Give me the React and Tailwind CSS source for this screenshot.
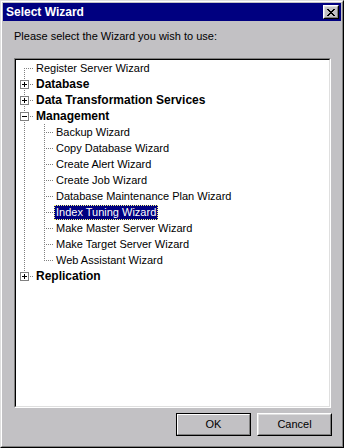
import React from 'react';

const rows = [
  { label: 'Register Server Wizard', level: 0, pos: 'first' },
  { label: 'Database', level: 0, pos: 'mid', bold: true, exp: '+' },
  { label: 'Data Transformation Services', level: 0, pos: 'mid', bold: true, exp: '+' },
  { label: 'Management', level: 0, pos: 'mid', bold: true, exp: '-' },
  { label: 'Backup Wizard', level: 1, pos: 'mid' },
  { label: 'Copy Database Wizard', level: 1, pos: 'mid' },
  { label: 'Create Alert Wizard', level: 1, pos: 'mid' },
  { label: 'Create Job Wizard', level: 1, pos: 'mid' },
  { label: 'Database Maintenance Plan Wizard', level: 1, pos: 'mid' },
  { label: 'Index Tuning Wizard', level: 1, pos: 'mid', selected: true },
  { label: 'Make Master Server Wizard', level: 1, pos: 'mid' },
  { label: 'Make Target Server Wizard', level: 1, pos: 'mid' },
  { label: 'Web Assistant Wizard', level: 1, pos: 'last' },
  { label: 'Replication', level: 0, pos: 'last', bold: true, exp: '+' },
];

// dotted line made of single pixels, every other one
function vDots(x, y1, y2, key) {
  const out = [];
  for (let y = y1; y < y2; y++) {
    if (y % 2 === 0) out.push(<rect key={key + '-' + y} x={x} y={y} width="1" height="1" fill="#808080" />);
  }
  return out;
}

function hDots(x1, x2, y, key) {
  const out = [];
  for (let x = x1; x < x2; x++) {
    if (x % 2 === 0) out.push(<rect key={key + '-' + x} x={x} y={y} width="1" height="1" fill="#808080" />);
  }
  return out;
}

function TreeLines({ level, pos, exp }) {
  const w = 20 * level + 18;
  const cx = 20 * level + 8;
  let parts = [];
  if (level === 1) parts = parts.concat(vDots(8, 0, 16, 'p'));
  if (pos === 'first') parts = parts.concat(vDots(cx, 8, 16, 'v'));
  if (pos === 'mid') parts = parts.concat(vDots(cx, 0, 16, 'v'));
  if (pos === 'last') parts = parts.concat(vDots(cx, 0, 9, 'v'));
  parts = parts.concat(hDots(exp ? cx + 6 : cx, cx + 10, 8, 'h'));
  return (
    <svg width={w} height="16" className="shrink-0" shapeRendering="crispEdges">
      {parts}
      {exp && (
        <g>
          <rect x={cx - 4 + 0.5} y={4.5} width="8" height="8" fill="#fff" stroke="#808080" />
          <rect x={cx - 2} y={8} width="5" height="1" fill="#000" />
          {exp === '+' && <rect x={cx} y={6} width="1" height="5" fill="#000" />}
        </g>
      )}
    </svg>
  );
}

function Button({ children, def }) {
  if (def) {
    return (
      <div className="w-[75px] h-[23px] border border-black">
        <div className="h-full border border-t-white border-l-white border-r-[#808080] border-b-[#808080] flex items-center justify-center text-[11px] text-black">
          {children}
        </div>
      </div>
    );
  }
  return (
    <div className="w-[75px] h-[23px] border border-t-white border-l-white border-r-black border-b-black">
      <div className="h-full border border-t-[#dfdfdf] border-l-[#dfdfdf] border-r-[#808080] border-b-[#808080] flex items-center justify-center text-[11px] text-black">
        {children}
      </div>
    </div>
  );
}

export default function App() {
  return (
    <div
      className="w-[344px] h-[448px] bg-[#c2c1c4] border border-t-[#dfdfdf] border-l-[#dfdfdf] border-r-black border-b-black"
      style={{ fontFamily: '"Liberation Sans", Arial, sans-serif' }}
    >
      <div className="h-full border border-t-white border-l-white border-r-[#808080] border-b-[#808080] p-px flex flex-col">
        {/* Title bar */}
        <div className="h-[18px] bg-[#000080] flex items-center justify-between pl-[3px] pr-[2px]">
          <span className="text-white font-bold text-[12px] leading-none">Select Wizard</span>
          <div className="w-[16px] h-[14px] bg-[#c2c1c4] border border-t-white border-l-white border-r-black border-b-black">
            <div className="w-full h-full border border-t-[#dfdfdf] border-l-[#dfdfdf] border-r-[#808080] border-b-[#808080] flex items-center justify-center">
              <svg width="8" height="7" shapeRendering="crispEdges">
                <path d="M0 0h2v1h1v1h2v-1h1v-1h2v1h-1v1h-1v1h-1v1h1v1h1v1h1v1h-2v-1h-1v-1h-2v1h-1v1h-2v-1h1v-1h1v-1h1v-1h-1v-1h-1v-1h-1z" fill="#000" />
              </svg>
            </div>
          </div>
        </div>

        <div className="mt-[9px] ml-[11px] h-[13px] leading-[13px] text-[11px] text-black">
          Please select the Wizard you wish to use:
        </div>

        {/* Tree view */}
        <div className="mt-[15px] ml-[11px] w-[317px] h-[350px] border border-t-[#808080] border-l-[#808080] border-r-white border-b-white">
          <div className="h-full bg-white border border-t-black border-l-black border-r-[#dfdfdf] border-b-[#dfdfdf] overflow-hidden">
            {rows.map((r) => (
              <div key={r.label} className="flex items-center h-[16px]">
                <TreeLines level={r.level} pos={r.pos} exp={r.exp} />
                <span
                  className={
                    'h-[15px] flex items-center px-px whitespace-nowrap border border-dotted ' +
                    (r.selected ? 'bg-[#000080] text-white border-[#ffff80]' : 'text-black border-transparent') +
                    (r.bold ? ' font-bold text-[12px]' : ' text-[11px]')
                  }
                >
                  {r.label}
                </span>
              </div>
            ))}
          </div>
        </div>

        {/* Buttons */}
        <div className="mt-[5px] flex justify-end gap-[6px] pr-[9px]">
          <Button def>OK</Button>
          <Button>Cancel</Button>
        </div>
      </div>
    </div>
  );
}
